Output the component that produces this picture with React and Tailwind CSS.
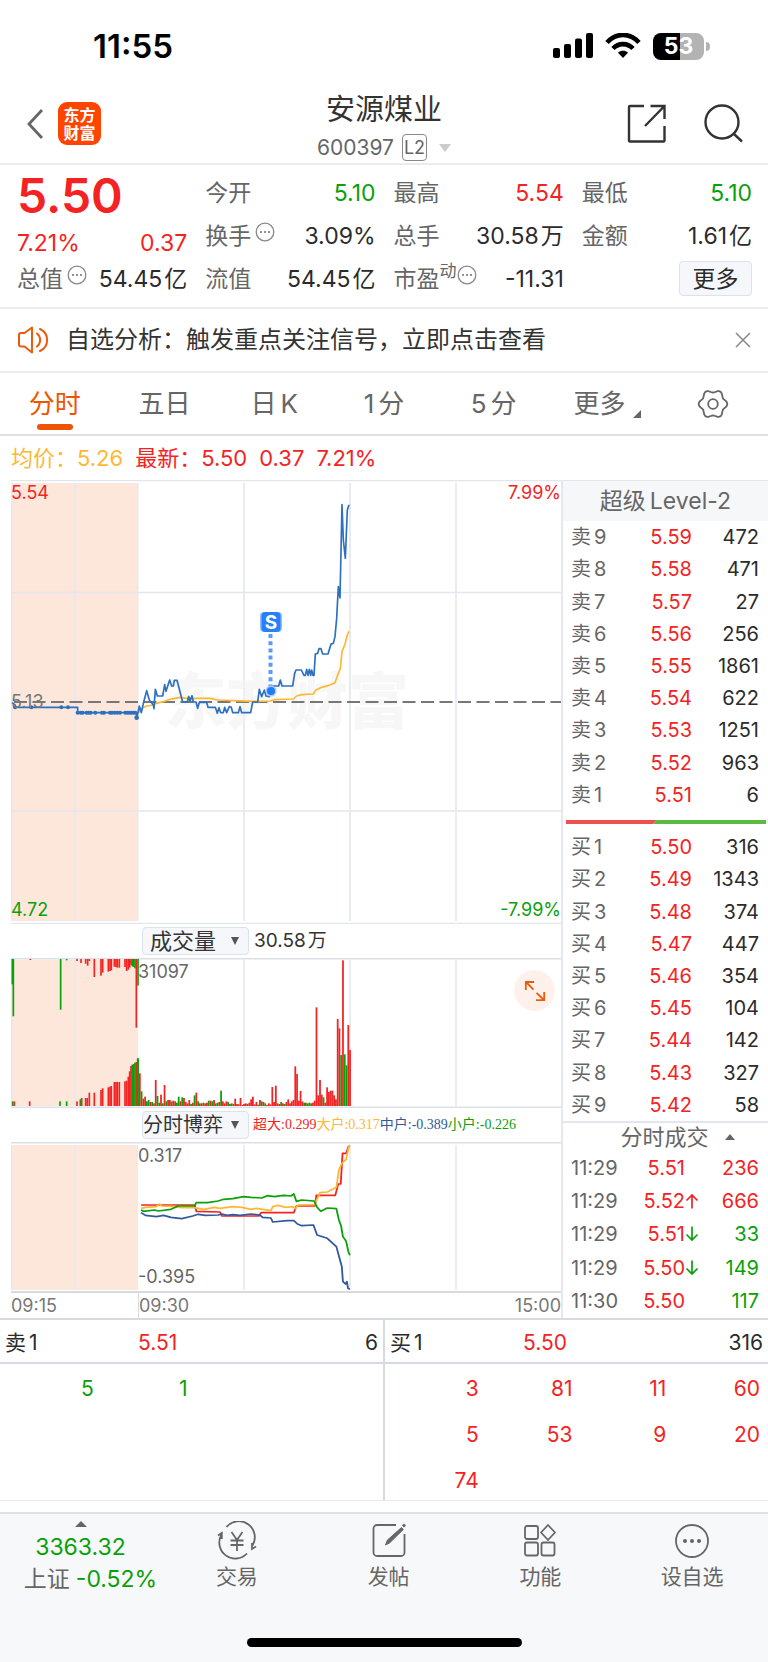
import React from "react";

const RED = "#f42323";
const GREEN = "#0aa00a";

const gearPath =
  Array.from({ length: 73 }, (_, i) => {
    const a = (i * 5 * Math.PI) / 180;
    const r = 12.9 + 1.4 * Math.cos(6 * a);
    return `${i ? "L" : "M"}${(16 + r * Math.cos(a)).toFixed(2)} ${(16 + r * Math.sin(a)).toFixed(2)}`;
  }).join("") + "Z";

const sells = [
  ["9", "5.59", "472"],
  ["8", "5.58", "471"],
  ["7", "5.57", "27"],
  ["6", "5.56", "256"],
  ["5", "5.55", "1861"],
  ["4", "5.54", "622"],
  ["3", "5.53", "1251"],
  ["2", "5.52", "963"],
  ["1", "5.51", "6"],
];
const buys = [
  ["1", "5.50", "316"],
  ["2", "5.49", "1343"],
  ["3", "5.48", "374"],
  ["4", "5.47", "447"],
  ["5", "5.46", "354"],
  ["6", "5.45", "104"],
  ["7", "5.44", "142"],
  ["8", "5.43", "327"],
  ["9", "5.42", "58"],
];
const trades = [
  ["11:29", "5.51", "", "236", true],
  ["11:29", "5.52", "up", "666", true],
  ["11:29", "5.51", "down", "33", false],
  ["11:29", "5.50", "down", "149", false],
  ["11:30", "5.50", "", "117", false],
];

/* [x, height, green?] in third-pixels, auction phase */
const auctionBottom = [
  [38, 14, 1], [43, 14], [89, 14], [180, 14, 1], [200, 14, 1], [231, 14], [241, 20, 1], [245, 24], [257, 24], [262, 24],
  [268, 40], [283, 40], [303, 48], [308, 53], [325, 56], [330, 58], [334, 60], [343, 72], [348, 72], [352, 72], [358, 72],
  [375, 74], [380, 76], [385, 88], [389, 104], [393, 120], [397, 124, 1], [401, 126, 1], [405, 130, 1], [409, 132], [413, 143, 1],
];
const auctionTop = [
  [37, 76, 1], [40, 172, 1], [91, 3], [182, 152, 1], [200, 4, 1], [231, 6], [243, 12], [257, 14], [263, 20], [268, 6],
  [283, 54], [303, 50], [308, 41], [325, 38], [330, 36], [334, 34], [343, 23], [348, 24], [352, 26], [358, 26],
  [375, 24], [380, 36], [385, 32], [389, 26], [393, 18], [397, 22, 1], [401, 24, 1], [405, 28, 1], [409, 206], [414, 80, 1],
];
/* one entry per minute, negative = falling */
const minuteVolume = [
  -143, 98, -44, 22, 28, -14, -18, 12, -12, 8, 78, -30, -10, 34, -8, 63, -14, 18, 18, -14, 16, 14, -10, -28, 14, -26, 24, 12, 8, 18,
  -6, 10, -32, 40, -14, 8, 8, -10, 8, 10, -16, 16, -14, 18, -8, -10, 12, -46, 14, 8, 14, -12, -6, 8, -6, 22, 6, 5, 24, 3,
  6, 8, -6, 10, 20, 28, 5, 12, -4, 18, -14, 12, -8, 3, 8, 5, 57, 12, 61, 8, 6, -12, 8, -6, 12, 20, 8, 14, 18, 119,
  96, 16, 45, 14, -10, 10, -8, -10, -8, 10, 16, 296, 32, 78, 34, -26, 10, 56, 42, 46, 46, 32, 20, 261, 233, -153, 437, -155, -122, 243, 168,
];

const pricePath =
  "M-354 638L-345 645L-345 652H-157V668H20V684L24 668L28 648L34 668L42 632L50 602L58 630L70 645L72 656L76 598L82 618H98L104 584L108 604L119 570L125 588H130L133 571H141L158 636H172L176 619L180 634L186 617L190 636H198L203 655L208 637H230L234 652H256L262 670L267 653L272 668H280L284 652L290 668L298 650L304 652L308 668H325L330 650L335 668H362L368 636H383L388 598L395 620L403 600L408 618L418 620L424 604L430 588H446L451 570L456 588H488L494 550L498 540H514L522 556H526L530 538L534 556L538 538L542 556L545 540L549 556H552L556 492L563 490L567 476H573L578 492H594L603 462L610 460L615 440L620 385L625 290L630 324L636 44L640 150L646 205L652 60L657 44";
const averagePath =
  "M22 672L36 655L50 648L70 645L76 641L100 635L120 628L150 622L170 625H240L265 630L310 632L370 634L420 633L435 629L490 627L500 618L515 614L550 612L558 600L575 592L600 585L615 578L622 558L631 535L636 485L645 462L652 435L657 424";
const auctionDots = [-345, -296, -206, -186, -157, -148, -142, -130, -124, -118, -104, -84, -78, -60, -54, -46, -38, -30, -14, -8, -2, 4, 10, 16];

const flowLines = [
  ["#f42323", "M388 315H535L540 334L605 336L610 348H712L718 338H808L815 318H866L870 286H922L930 252H937L942 160H952L958 140H962"],
  ["#fdb833", "M388 325L400 322L430 320L438 312L445 318L480 320L500 323L530 322L560 328L590 322L605 325L640 320L665 322L690 328L705 325L745 332L750 320L765 316L785 322L805 320L812 326L820 315L865 314L880 278L900 276L925 262L932 210L940 190L952 178L958 145L962 134"],
  ["#0aa00a", "M388 330L395 334L425 330L435 333L470 328L490 318H535L540 308H570L600 303L615 298L640 296L670 290L690 292L720 294L735 287L755 290L780 286L800 288L808 282L815 304L830 300L864 303L872 322L882 334L900 324L925 326L932 360L938 378L943 410L952 424L958 455L962 466"],
  ["#31599b", "M388 338L400 346L430 350L450 346L470 352L500 356L530 348L545 343L565 346L600 345L610 342L625 346L640 344L660 346L690 342L715 345L722 352L745 354L750 366L790 362H808L818 372L830 377L862 375L872 405L900 415L925 440L935 480L940 500L943 545L950 552L954 545L957 565L962 568"],
];

function Dots() {
  return (
    <svg className="h-5 w-5 shrink-0" viewBox="0 0 20 20" fill="none" stroke="#888" strokeWidth="1.3" aria-hidden="true">
      <circle cx="10" cy="10" r="8.8" />
      <g fill="#777" stroke="none">
        <circle cx="6" cy="10" r="1.1" />
        <circle cx="10" cy="10" r="1.1" />
        <circle cx="14" cy="10" r="1.1" />
      </g>
    </svg>
  );
}

function Stat({ label, value, unit, color = "text-[#2b2b2b]", dots, sup }) {
  return (
    <div className="flex h-[43px] items-center justify-between">
      <span className="flex items-center text-[#666]">
        {label}
        {sup && <span className="-mt-4 text-[17px]">{sup}</span>}
        {dots && <span className={sup ? "-mt-2" : "-mt-2 ml-1"}><Dots /></span>}
      </span>
      <span className={`flex gap-0.5 ${color}`}>
        <span>{value}</span>
        {unit && <span>{unit}</span>}
      </span>
    </div>
  );
}

function StatusBar() {
  return (
    <div className="flex h-[92px] items-center justify-between pr-[58px] pl-[93px]">
      <span className="text-[33px] leading-10 font-semibold text-black">11:55</span>
      <div className="flex items-center gap-3">
        <svg className="h-[26px] w-10" viewBox="0 0 40 26" aria-hidden="true">
          <rect x="0" y="15" width="7" height="10" rx="2" />
          <rect x="11" y="11" width="7" height="14" rx="2" />
          <rect x="22" y="5.500" width="7" height="19.500" rx="2" />
          <rect x="33" y="0" width="7" height="25" rx="2" />
        </svg>
        <svg className="h-[26px] w-9" viewBox="0 0 36 26" fill="none" stroke="#000" strokeWidth="4.600" aria-hidden="true">
          <path d="M2 9.500C11-.6 25-.6 34 9.500" />
          <path d="M8 15.500C13.500 9.600 22.500 9.600 28 15.500" />
          <path d="M18 25l-5-5.200c2.800-2.600 7.200-2.600 10 0z" fill="#000" stroke="none" />
        </svg>
        <div className="flex items-center gap-0.5">
          <div className="flex h-[27px] w-[51px] items-center justify-center rounded-lg bg-gradient-to-r from-black from-[53%] to-[#b3b3b3] to-[53%] text-[23px] leading-none font-bold text-white">
            53
          </div>
          <div className="h-[9px] w-1 rounded-r-full bg-[#b3b3b3]" />
        </div>
      </div>
    </div>
  );
}

function Header() {
  return (
    <header className="flex h-[73px] items-center justify-between border-b-2 border-[#ebebeb] px-6">
      <div className="mb-2 flex w-[120px] items-center gap-3">
        <button aria-label="返回">
          <svg className="h-8 w-[22px]" viewBox="0 0 22 32" fill="none" stroke="#666" strokeWidth="2.800" aria-hidden="true">
            <path d="M18 2L5 16l13 14" />
          </svg>
        </button>
        <a href="#home" className="flex h-[43px] w-[43px] flex-col items-center justify-center rounded-[9px] bg-[#ff4400] text-base leading-[18px] font-bold text-white">
          <span>东方</span>
          <span>财富</span>
        </a>
      </div>
      <div className="flex flex-col items-center">
        <h1 className="mb-1 text-[29px] leading-9 text-[#333]">安源煤业</h1>
        <button className="flex h-8 items-center gap-2 text-[21px] text-[#666]">
          600397
          <span className="flex h-[27px] w-[25px] items-center justify-center rounded border border-[#888] text-lg leading-none">L2</span>
          <svg className="ml-1 h-2 w-3" viewBox="0 0 12 8" fill="#ccc" aria-hidden="true"><path d="M0 0h12L6 8z" /></svg>
        </button>
      </div>
      <div className="mb-2 flex w-[120px] justify-end gap-[37px]">
        <button aria-label="分享">
          <svg className="h-10 w-10" viewBox="0 0 40 40" fill="none" stroke="#333" strokeWidth="2.400" aria-hidden="true">
            <path d="M17 2H3a1 1 0 0 0-1 1v33.500a1 1 0 0 0 1 1h33.500a1 1 0 0 0 1-1V22M23.500 2h14v13M37 2.500L18 22" />
          </svg>
        </button>
        <button aria-label="搜索">
          <svg className="h-10 w-10" viewBox="0 0 40 40" fill="none" stroke="#333" strokeWidth="2.400" aria-hidden="true">
            <circle cx="18" cy="18" r="16.500" />
            <path d="M30 30l8 7.500" />
          </svg>
        </button>
      </div>
    </header>
  );
}

function Quote() {
  return (
    <section className="h-36 border-b-2 border-[#ebebeb] pt-[6px] text-[23px] leading-8">
      <div className="grid grid-cols-4 gap-x-[18px] pr-4 pl-[17px]">
        <div>
          <div className="h-[51px] text-[48px] leading-[50px] font-semibold text-[#f42323]">5.50</div>
          <div className="flex h-[41px] items-center justify-between text-[#f42323]">
            <span>7.21%</span>
            <span>0.37</span>
          </div>
          <div className="-mt-1.5">
            <Stat label="总值" value="54.45" unit="亿" dots />
          </div>
        </div>
        <div>
          <Stat label="今开" value="5.10" color="text-[#0aa00a]" />
          <Stat label="换手" value="3.09%" dots />
          <Stat label="流值" value="54.45" unit="亿" />
        </div>
        <div>
          <Stat label="最高" value="5.54" color="text-[#f42323]" />
          <Stat label="总手" value="30.58" unit="万" />
          <Stat label="市盈" sup="动" value="-11.31" dots />
        </div>
        <div>
          <Stat label="最低" value="5.10" color="text-[#0aa00a]" />
          <Stat label="金额" value="1.61" unit="亿" />
          <div className="flex h-[43px] items-center justify-end">
            <button className="h-[35px] w-[73px] rounded border border-[#dce2ec] bg-[#f6f7fa] text-[23px] leading-8 text-[#2b2b2b]">更多</button>
          </div>
        </div>
      </div>
    </section>
  );
}

function Notice() {
  return (
    <section className="flex h-16 items-center border-b-2 border-[#ebebeb] px-[17px]">
      <svg className="h-7 w-8" viewBox="0 0 32 28" fill="none" stroke="#ee5a0c" strokeWidth="2" strokeLinejoin="round" strokeLinecap="round" aria-hidden="true">
        <path d="M15 1.500L7.500 7H4a2 2 0 0 0-2 2v9.500a2 2 0 0 0 2 2h3.500L15 26.500zM20 7.500c4.200 3.400 4.200 9.600 0 13M23 3c9.500 4.500 9.500 17.500 0 22" />
      </svg>
      <a href="#signals" className="ml-[17px] flex-1 text-2xl text-[#333]">自选分析：触发重点关注信号，立即点击查看</a>
      <button aria-label="关闭">
        <svg className="h-4 w-4" viewBox="0 0 16 16" stroke="#888" strokeWidth="1.500" aria-hidden="true"><path d="M1 1l14 14M15 1L1 15" /></svg>
      </button>
    </section>
  );
}

function Tabs() {
  const cls = "relative flex h-full items-center justify-center gap-1";
  return (
    <nav className="grid h-[63px] grid-cols-7 border-b-2 border-[#dfe0e6] text-[26px] text-[#666]">
      <button className="relative flex h-full items-center justify-center text-[#ee5500]">
        分时
        <span className="absolute bottom-1 left-1/2 h-[6px] w-9 -translate-x-1/2 rounded-sm bg-[#ee5500]" />
      </button>
      <button className={cls}>五日</button>
      <button className={cls}><span>日</span><span>K</span></button>
      <button className={cls}><span>1</span><span>分</span></button>
      <button className={cls}><span>5</span><span>分</span></button>
      <button className="flex h-full items-center justify-center gap-2 pl-2">
        更多
        <svg className="mt-5 h-2 w-2" viewBox="0 0 8 8" fill="#666" aria-hidden="true"><path d="M8 0v8H0z" /></svg>
      </button>
      <button className={cls} aria-label="设置">
        <svg className="h-8 w-8" viewBox="0 0 32 32" fill="none" stroke="#666" strokeWidth="1.800" aria-hidden="true">
          <path d={gearPath} />
          <circle cx="16" cy="16" r="4.800" />
        </svg>
      </button>
    </nav>
  );
}

function Grid({ top, bottom, left = 11 }) {
  return (
    <g>
      <rect x={left} y={top} width={138 - left} height={bottom - top} fill="#fde6da" />
      <g stroke="#e5e8ef" strokeWidth="1.500">
        <path d={`M75 ${top}V${bottom}M244 ${top}V${bottom}M350 ${top}V${bottom}M456 ${top}V${bottom}M11.500 ${top}V${bottom}`} />
      </g>
    </g>
  );
}

function PriceChart() {
  return (
    <div className="relative h-[444px] text-lg leading-5">
      <svg className="block h-full w-full" viewBox="11 480 550 444" preserveAspectRatio="none" aria-label="分时走势">
        <Grid top={483} bottom={921} />
        <text x="287" y="724" textAnchor="middle" fontSize="61" fontWeight="900" fill="#f7f7f7">东方财富</text>
        <path d="M11 592.500H562M11 811H562M11 480.500H562M11 923.500H562" stroke="#e3e6ee" strokeWidth="1.500" />
        <path d="M138 483V921M244 483V921M350 483V921" stroke="#e5e8ef" strokeWidth="1" />
        <path d="M14 702H562" stroke="#777" strokeWidth="2" strokeDasharray="13 5.500" />
        <g transform="translate(130 490) scale(.33333)" fill="none" strokeLinejoin="round">
          <path d={averagePath} stroke="#fdb833" strokeWidth="5" />
          <path d={pricePath} stroke="#2d70c0" strokeWidth="5" />
          <g fill="#2d70c0">
            {auctionDots.map((x) => (
              <circle key={x} cx={x} cy={x < -160 ? 652 : 668} r="6" />
            ))}
            <circle cx="20" cy="683" r="7" />
          </g>
        </g>
        <path d="M270.500 634V688" stroke="#5b9bf7" strokeWidth="4" strokeDasharray="4 3.200" />
        <circle cx="271" cy="691" r="5.500" fill="#a9ccfb" />
        <circle cx="271" cy="691" r="4" fill="#1f7cf5" />
        <rect x="260" y="612" width="22" height="20" rx="4" fill="#8fbffb" />
        <rect x="261.500" y="612" width="19" height="20" rx="4" fill="#2680f8" />
        <text x="271" y="629" textAnchor="middle" fontSize="19" fontWeight="700" fill="#fff">S</text>
      </svg>
      <span className="absolute top-[3px] left-0 text-[#f42323]">5.54</span>
      <span className="absolute top-[3px] right-0 text-[#f42323]">7.99%</span>
      <span className="absolute top-[212px] left-0 text-[#777]">5.13</span>
      <span className="absolute bottom-[4px] left-0 text-[#0aa00a]">4.72</span>
      <span className="absolute right-0 bottom-[4px] text-[#0aa00a]">-7.99%</span>
    </div>
  );
}

function IndicatorSelect({ label, options, tight }) {
  return (
    <div className="relative">
      <select
        aria-label={label}
        className={`block h-7 w-[107px] appearance-none rounded border border-[#dce2ec] bg-[#f6f7fa] leading-6 text-[#333] ${tight ? "pl-0 text-xl" : "pl-[7px] text-[22px]"}`}
      >
        {options.map((o) => (
          <option key={o}>{o}</option>
        ))}
      </select>
      <svg className="pointer-events-none absolute top-2.5 right-2.5 h-2 w-2" viewBox="0 0 8 8" fill="#555" aria-hidden="true"><path d="M0 0h8L4 8z" /></svg>
    </div>
  );
}

function VolumeChart() {
  return (
    <div className="relative h-[150px] text-lg leading-5">
      <svg className="block h-full w-full" viewBox="11 958 550 150" preserveAspectRatio="none" aria-label="成交量">
        <Grid top={960} bottom={1106} />
        <path d="M11 958.700H562M11 1107.300H562" stroke="#dcdfe7" strokeWidth="1.500" />
        <g transform="translate(0 900) scale(.33333)">
          {auctionTop.map(([x, h, g]) => (
            <rect key={x} x={x - 2.500} y="177" width="5" height={h} fill={g ? GREEN : RED} />
          ))}
          {auctionBottom.map(([x, h, g]) => (
            <rect key={x} x={x - 2.500} y={618 - h} width="5" height={h} fill={g ? GREEN : RED} />
          ))}
          {minuteVolume.map((v, i) => (
            <rect key={i} x={411.500 + i * 5.300} y={618 - Math.abs(v)} width="5.300" height={Math.abs(v)} fill={v < 0 ? GREEN : RED} />
          ))}
        </g>
      </svg>
      <span className="absolute top-1 left-[127px] text-[#666]">31097</span>
      <button aria-label="全屏" className="absolute top-3 right-1.5 flex h-[41px] w-[41px] items-center justify-center rounded-full bg-[#fef1eb]">
        <svg className="h-6 w-6" viewBox="0 0 24 24" fill="none" stroke="#ee5a0c" strokeWidth="1.800" aria-hidden="true">
          <path d="M2.800 11V3H11M3 3l7.500 7.700M21.200 13v8.200H13M21 21l-7.500-7.200" />
        </svg>
      </button>
    </div>
  );
}

function FlowChart() {
  return (
    <div className="relative h-[149px] text-lg leading-5">
      <svg className="block h-full w-full" viewBox="11 1142 550 149" preserveAspectRatio="none" aria-label="分时博弈">
        <Grid top={1145} bottom={1290} />
        <path d="M11 1142.700H562" stroke="#dcdfe7" strokeWidth="1.500" />
        <g transform="translate(0 1100) scale(.36364 .33333)" fill="none" strokeWidth="5" strokeLinejoin="round">
          {flowLines.map(([c, d]) => (
            <path key={c} d={d} stroke={c} />
          ))}
        </g>
      </svg>
      <span className="absolute top-1 left-[127px] text-[#666]">0.317</span>
      <span className="absolute bottom-1 left-[127px] text-[#666]">-0.395</span>
    </div>
  );
}

function Book({ side, rows }) {
  return (
    <table className="h-[290px] w-full">
      <tbody>
        {rows.map(([n, p, q]) => (
          <tr key={n}>
            <td className="w-[54px] pl-2 text-[#666]">
              <span className="flex gap-[3px]"><span>{side}</span><span>{n}</span></span>
            </td>
            <td className="w-[75px] text-right text-[#f42323]">{p}</td>
            <td className="pr-[9px] text-right text-[#2b2b2b]">{q}</td>
          </tr>
        ))}
      </tbody>
    </table>
  );
}

function Arrow({ dir }) {
  if (!dir) return null;
  return (
    <svg className="h-4 w-3.5" viewBox="0 0 14 16" fill="none" stroke={dir === "up" ? RED : GREEN} strokeWidth="1.700" aria-hidden="true">
      <path d={dir === "up" ? "M7 15.500V2M1.500 7.500L7 2l5.500 5.500" : "M7 .5V14M1.500 8.500L7 14l5.500-5.500"} />
    </svg>
  );
}

function SidePanel() {
  return (
    <aside className="w-[207px] shrink-0 border-l-2 border-[#e5e8ef] text-[20px] leading-6">
      <h2 className="flex h-[41px] items-center justify-center gap-1 border-t border-[#e3e6ee] bg-[#f6f7f9] text-[23px] text-[#666]">
        <span>超级</span>
        <span>Level-2</span>
      </h2>
      <Book side="卖" rows={sells} />
      <svg className="mx-[3px] mt-[9px] mb-[7px] block h-1 w-[200px]" viewBox="0 0 200 4" aria-hidden="true">
        <path d="M0 0h91l-4 4H0z" fill="#ee4f4f" />
        <path d="M91 0h109v4H87z" fill="#5abb43" />
      </svg>
      <Book side="买" rows={buys} />
      <button className="flex h-[30px] w-full items-center justify-center gap-4 border-t-2 border-[#e3e6ee] pl-6 text-[22px] text-[#666]">
        分时成交
        <svg className="h-1.5 w-2.5" viewBox="0 0 10 6" fill="#666" aria-hidden="true"><path d="M0 6h10L5 0z" /></svg>
      </button>
      <table className="h-[167px] w-full">
        <tbody>
          {trades.map(([t, p, dir, q, up], i) => (
            <tr key={i}>
              <td className="w-[60px] pl-2 text-[#666]">{t}</td>
              <td className="w-[62px] text-right text-[#f42323]">{p}</td>
              <td className="w-3.5"><Arrow dir={dir} /></td>
              <td className={up ? "pr-[9px] text-right text-[#f42323]" : "pr-[9px] text-right text-[#0aa00a]"}>{q}</td>
            </tr>
          ))}
        </tbody>
      </table>
    </aside>
  );
}

function QueueSide({ side, price, qty, cells, color, className }) {
  return (
    <div className={`h-[180px] flex-1 ${className}`}>
      <div className="relative flex h-11 items-center justify-between border-b-2 border-[#d8dae1] px-[5px] pt-1 text-[#2b2b2b]">
        <span className="flex gap-[3px]"><span>{side}</span><span>1</span></span>
        <span>{qty}</span>
        <span className="absolute left-[138px] text-[#f42323]">{price}</span>
      </div>
      <div className={`grid grid-cols-4 pt-0.5 pr-2 ${color}`}>
        {cells.map((c, i) => (
          <span key={i} className="h-[46px] text-right leading-[46px]">{c}</span>
        ))}
      </div>
    </div>
  );
}

function NavItem({ label, children }) {
  return (
    <button className="flex flex-1 flex-col items-center pt-[7px] text-[21px] leading-8 text-[#666]">
      <svg className="h-10 w-10" viewBox="0 0 40 40" fill="none" stroke="#666" strokeWidth="1.800" aria-hidden="true">
        {children}
      </svg>
      <span>{label}</span>
    </button>
  );
}

function BottomBar() {
  return (
    <footer className="mt-[11px] flex h-[150px] flex-col justify-between border-t-2 border-[#dfe0e4] bg-[#f7f8fa]">
      <nav className="flex items-start">
        <button className="flex w-[161px] flex-col items-center pt-[7px] text-[23px]">
          <svg className="h-1.5 w-3" viewBox="0 0 12 6" fill="#666" aria-hidden="true"><path d="M0 6h12L6 0z" /></svg>
          <span className="mt-1 leading-8 text-[#0aa00a]">3363.32</span>
          <span className="ml-5 flex gap-1.5 leading-8">
            <span className="text-[#666]">上证</span>
            <span className="text-[#0aa00a]">-0.52%</span>
          </span>
        </button>
        <NavItem label="交易">
          <path d="M9.500 6A16 16 0 0 1 35.500 24.500M30 32.500A16 16 0 0 1 4.500 13.500M1 14.500l3.800-2.500v6M39 25.500L35 28v-6M14.500 11l5.500 8 5.500-8M13.500 19.500h13M13.500 24h13M20 19.500V30" />
        </NavItem>
        <NavItem label="发帖">
          <path d="M27 4H8a3.500 3.500 0 0 0-3.500 3.500v24A3.500 3.500 0 0 0 8 35h24a3.500 3.500 0 0 0 3.500-3.500V13" />
          <path d="M16.500 24l2-5L32.500 6.500l1.800 2L20.500 22z" fill="#666" strokeWidth="1" />
          <path d="M34 5.500l2-2" strokeWidth="3" />
        </NavItem>
        <NavItem label="功能">
          <rect x="5" y="5" width="13" height="13" rx="2" />
          <rect x="5" y="21.500" width="13" height="13" rx="2" />
          <rect x="21.500" y="21.500" width="13" height="13" rx="2" />
          <path d="M28 4l7 7.500-7 7.500-7-7.500z" strokeLinejoin="round" />
        </NavItem>
        <NavItem label="设自选">
          <circle cx="20" cy="20" r="16" />
          <g fill="#666" stroke="none">
            <circle cx="13" cy="20" r="2" />
            <circle cx="20" cy="20" r="2" />
            <circle cx="27" cy="20" r="2" />
          </g>
        </NavItem>
      </nav>
      <div className="mx-auto mb-[15px] h-[9px] w-[275px] rounded-full bg-black" />
    </footer>
  );
}

export default function App() {
  return (
    <div className="w-full bg-white font-['Inter','Noto_Sans_CJK_SC',sans-serif]">
      <StatusBar />
      <Header />
      <main>
        <Quote />
        <Notice />
        <Tabs />
        <div className="flex h-11 items-center gap-3 pl-[11px] text-[22px] whitespace-nowrap text-[#f42323]">
          <span className="text-[#fdb833]">均价：5.26</span>
          <span>最新：5.50</span>
          <span>0.37</span>
          <span>7.21%</span>
        </div>
        <div className="flex">
          <div className="min-w-0 flex-1 pl-[11px]">
            <PriceChart />
            <div className="flex h-[34px] items-center gap-[5px] pl-[131px] text-[19px] text-[#333]">
              <IndicatorSelect label="指标" options={["成交量"]} />
              <span className="flex gap-0.5"><span>30.58</span><span>万</span></span>
            </div>
            <VolumeChart />
            <div className="flex h-[34px] items-center gap-1 pl-[131px] font-['Liberation_Serif','Noto_Sans_CJK_SC',serif] text-sm whitespace-nowrap">
              <div className="font-['Inter','Noto_Sans_CJK_SC',sans-serif]">
                <IndicatorSelect label="副图指标" options={["分时博弈"]} tight />
              </div>
              <div className="flex">
                <span className="text-[#f42323]">超大:0.299</span>
                <span className="text-[#fdb833]">大户:0.317</span>
                <span className="text-[#31599b]">中户:-0.389</span>
                <span className="text-[#0aa00a]">小户:-0.226</span>
              </div>
            </div>
            <FlowChart />
            <div className="flex h-[27px] border-t-2 border-[#d8dae1] text-lg leading-[26px] text-[#777]">
              <span className="w-[127px]">09:15</span>
              <span className="flex-1 border-l border-[#d8dae1]">09:30</span>
              <span>15:00</span>
            </div>
          </div>
          <SidePanel />
        </div>
        <section className="flex border-t-2 border-b border-t-[#d8dae1] border-b-[#ebebeb] text-[21px]">
          <QueueSide side="卖" price="5.51" qty="6" color="text-[#0aa00a]" cells={["5", "1"]} className="border-r-2 border-[#d8dae1]" />
          <QueueSide side="买" price="5.50" qty="316" color="text-[#f42323]" cells={["3", "81", "11", "60", "5", "53", "9", "20", "74"]} className="" />
        </section>
      </main>
      <BottomBar />
    </div>
  );
}
